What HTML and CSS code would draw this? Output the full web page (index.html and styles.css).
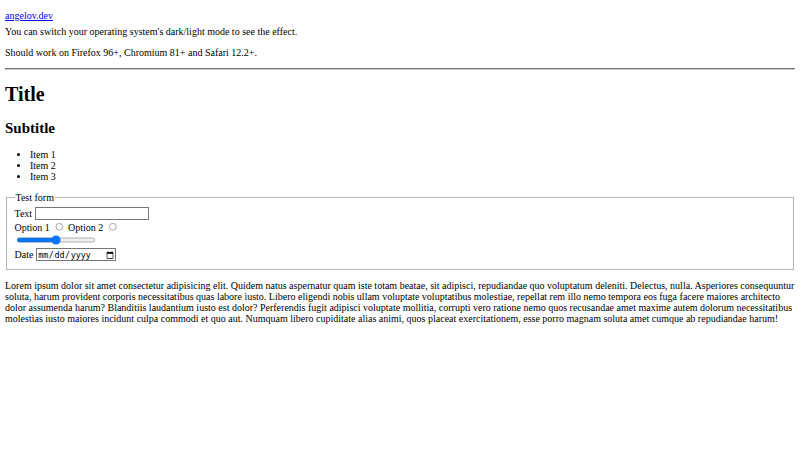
FILE: index.html
```html
<!DOCTYPE html>
<html lang="en">
<head>
  <meta charset="UTF-8" />
  <meta name="viewport" content="width=device-width, initial-scale=1" />
  <title>Dark/light test</title>
  <link rel="stylesheet" href="styles.css">
</head>
<body>
  <div class="credit"><a href="#">angelov.dev</a></div>
  <p class="note">You can switch your operating system's dark/light mode to see the effect.</p>
  <p>Should work on Firefox 96+, Chromium 81+ and Safari 12.2+.</p>
  <hr />

  <h1>Title</h1>
  <h2>Subtitle</h2>
  <ul>
    <li>Item 1</li>
    <li>Item 2</li>
    <li>Item 3</li>
  </ul>

  <form>
    <fieldset>
      <legend>Test form</legend>
      <div class="row">
        <label for="text">Text</label>
        <input type="text" id="text" />
      </div>
      <div class="row">
        <label for="opt1">Option 1</label>
        <input type="radio" name="opt" id="opt1" />
        <label for="opt2">Option 2</label>
        <input type="radio" name="opt" id="opt2" />
      </div>
      <div class="row">
        <input type="range" />
      </div>
      <div class="row">
        <label for="date">Date</label>
        <input type="date" id="date" />
      </div>
    </fieldset>
  </form>

  <p>Lorem ipsum dolor sit amet consectetur adipisicing elit. Quidem natus aspernatur quam iste totam beatae, sit adipisci, repudiandae quo voluptatum deleniti. Delectus, nulla. Asperiores consequuntur soluta, harum provident corporis necessitatibus quas labore iusto. Libero eligendi nobis ullam voluptate voluptatibus molestiae, repellat rem illo nemo tempora eos fuga facere maiores architecto dolor assumenda harum? Blanditiis laudantium iusto est dolor? Perferendis fugit adipisci voluptate mollitia, corrupti vero ratione nemo quos recusandae amet maxime autem dolorum necessitatibus molestias iusto maiores incidunt culpa commodi et quo aut. Numquam libero cupiditate alias animi, quos placeat exercitationem, esse porro magnam soluta amet cumque ab repudiandae harum!</p>
</body>
</html>
```

FILE: styles.css
```css
body {
  margin: 5px;
  font-family: "Liberation Serif", "Times New Roman", serif;
  font-size: 10px;
}
.credit {
  margin: 5px 0;
}
.note {
  margin-top: 0;
}
hr {
  border: 1px inset #c8c8c8;
}
ul {
  padding-left: 25px;
}
fieldset {
  margin: 0 1px;
  border: 1px solid #b4b4b4;
}
legend {
  padding: 0 1px;
}
input {
  zoom: 0.625;
}
.row {
  margin-bottom: 1px;
}
```
